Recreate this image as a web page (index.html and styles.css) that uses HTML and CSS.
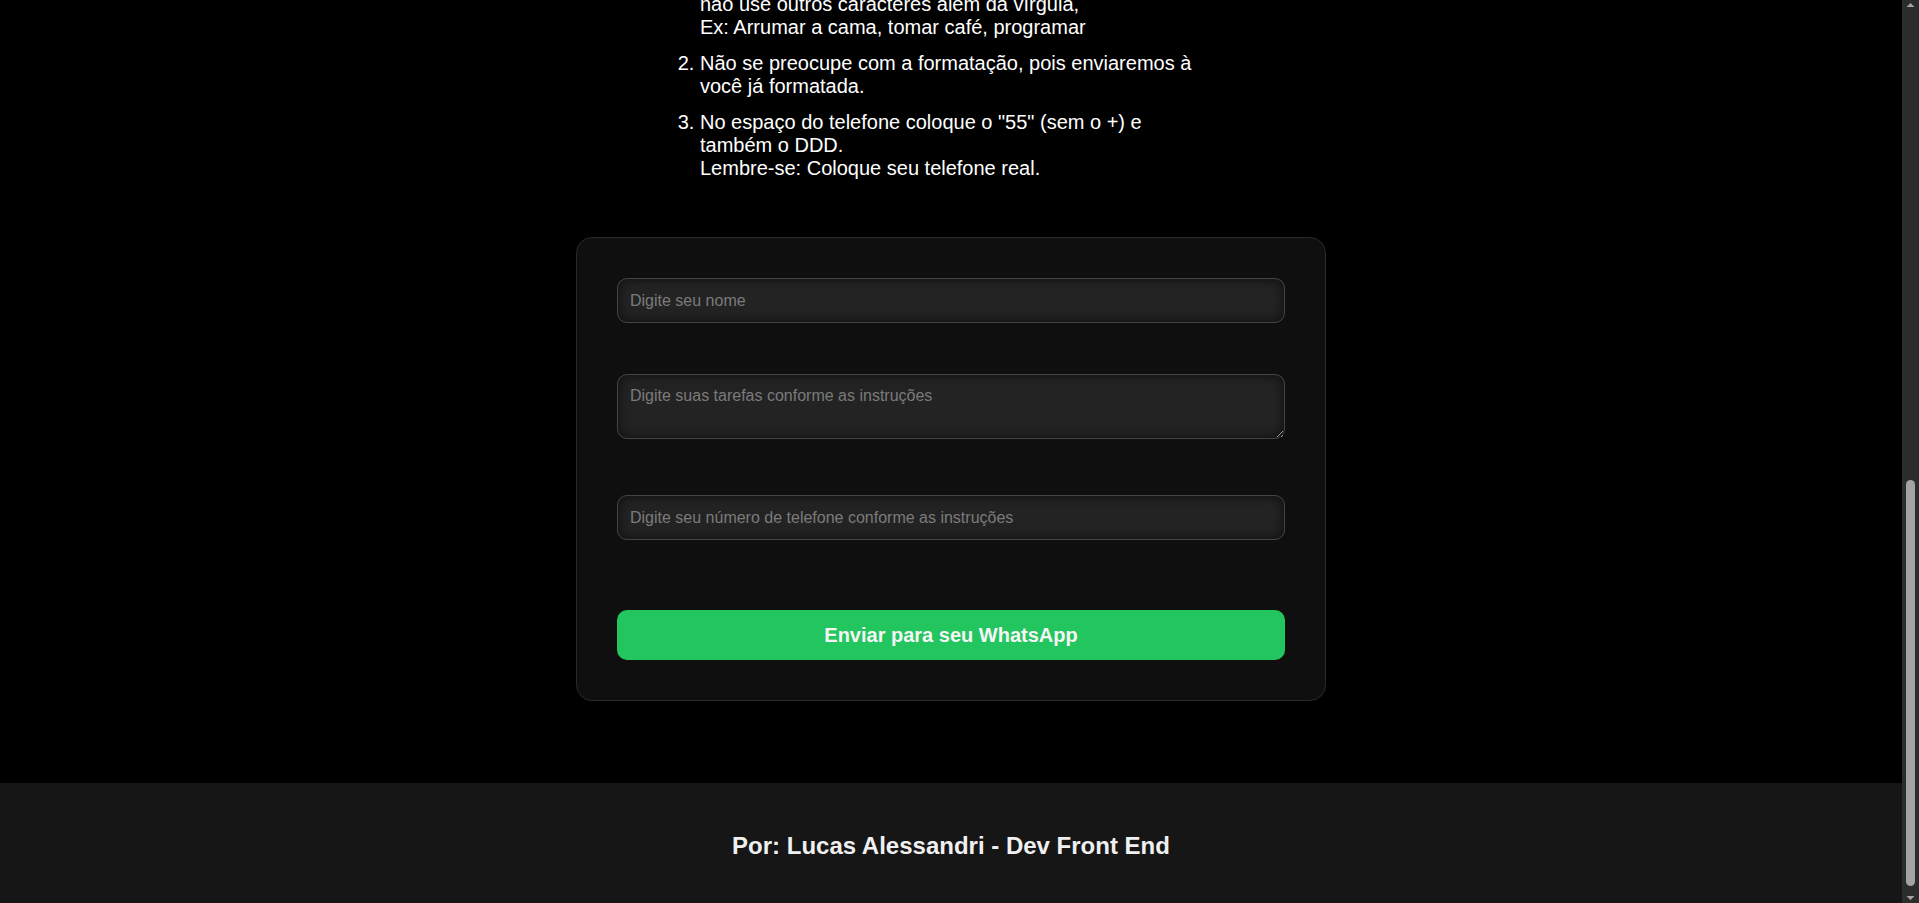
FILE: index.html
```html
<!DOCTYPE html>
<html lang="pt-BR">
<head>
<meta charset="utf-8">
<title>Lista de tarefas no WhatsApp</title>
<link rel="stylesheet" href="styles.css">
</head>
<body>
<div class="window">
  <div class="viewport">
    <main class="main">
      <section class="instructions">
        <ol class="steps">
          <li>Digite suas tarefas separadas por vírgula e<br>não use outros caracteres além da vírgula,<br>Ex: Arrumar a cama, tomar café, programar</li>
          <li>Não se preocupe com a formatação, pois enviaremos à você já formatada.</li>
          <li>No espaço do telefone coloque o "55" (sem o +) e também o DDD.<br>Lembre-se: Coloque seu telefone real.</li>
        </ol>
      </section>
      <form class="card">
        <input class="field" type="text" placeholder="Digite seu nome">
        <textarea class="field field-area" placeholder="Digite suas tarefas conforme as instruções"></textarea>
        <input class="field" type="tel" placeholder="Digite seu número de telefone conforme as instruções">
        <button class="send" type="button">Enviar para seu WhatsApp</button>
      </form>
    </main>
    <footer class="footer">
      <h2 class="credit">Por: Lucas Alessandri - Dev Front End</h2>
    </footer>
  </div>
  <div class="scrollbar" aria-hidden="true">
    <svg class="arrow" width="17" height="17" viewBox="0 0 17 17"><path d="M4.5 7 L8.5 3 L12.5 7 Z" fill="#a3a3a3"/></svg>
    <div class="track"><div class="thumb"></div></div>
    <svg class="arrow" width="17" height="17" viewBox="0 0 17 17"><path d="M4.5 10 L8.5 14 L12.5 10 Z" fill="#a3a3a3"/></svg>
  </div>
</div>
</body>
</html>
```

FILE: styles.css
```css
* {
  box-sizing: border-box;
}

html,
body {
  margin: 0;
  padding: 0;
}

body {
  background: #000;
  color: #fff;
  font-family: "Liberation Sans", Arial, sans-serif;
  overflow: hidden;
}

.window {
  display: flex;
  height: 903px;
}

.viewport {
  flex: 1;
  min-width: 0;
  display: flex;
  flex-direction: column;
  overflow: hidden;
}

.main {
  display: flex;
  flex-direction: column;
  align-items: center;
}

.instructions {
  width: 582px;
  margin-top: -30px;
}

.steps {
  margin: 0;
  padding: 0 30px 0 40px;
  font-size: 20px;
  line-height: 23px;
}

.steps li + li {
  margin-top: 13px;
}

.card {
  width: 750px;
  margin: 57px 0 82px;
  padding: 40px;
  background: #0f0f0f;
  border: 1px solid #2a2a2a;
  border-radius: 16px;
  display: flex;
  flex-direction: column;
}

.field {
  display: block;
  width: 100%;
  height: 45px;
  margin: 0;
  padding: 12px;
  font: 16px "Liberation Sans", Arial, sans-serif;
  color: #ddd;
  background: #232323;
  border: 1px solid #444;
  border-radius: 10px;
  box-shadow: inset 0 0 12px rgba(0, 0, 0, 0.65);
  outline: none;
}

.field::placeholder {
  color: #7b7b7b;
}

.field-area {
  height: 65px;
  margin: 51px 0 56px;
  resize: vertical;
}

.send {
  display: block;
  width: 100%;
  height: 50px;
  margin-top: 70px;
  padding: 0;
  border: none;
  border-radius: 10px;
  background: #22c55e;
  color: #f5f5f5;
  font: bold 20px "Liberation Sans", Arial, sans-serif;
  cursor: pointer;
}

.footer {
  background: #161616;
  padding: 49px 0 43px;
  text-align: center;
}

.credit {
  margin: 0;
  font-size: 24px;
  line-height: 28px;
  font-weight: bold;
  color: #f0f0f0;
}

.scrollbar {
  width: 17px;
  flex-shrink: 0;
  background: #2c2c2c;
  display: flex;
  flex-direction: column;
}

.arrow {
  display: block;
  flex-shrink: 0;
}

.track {
  flex: 1;
  display: flex;
  flex-direction: column;
  justify-content: flex-end;
  align-items: center;
}

.thumb {
  width: 9px;
  height: 406px;
  background: #a3a3a3;
  border-radius: 5px;
}
```
